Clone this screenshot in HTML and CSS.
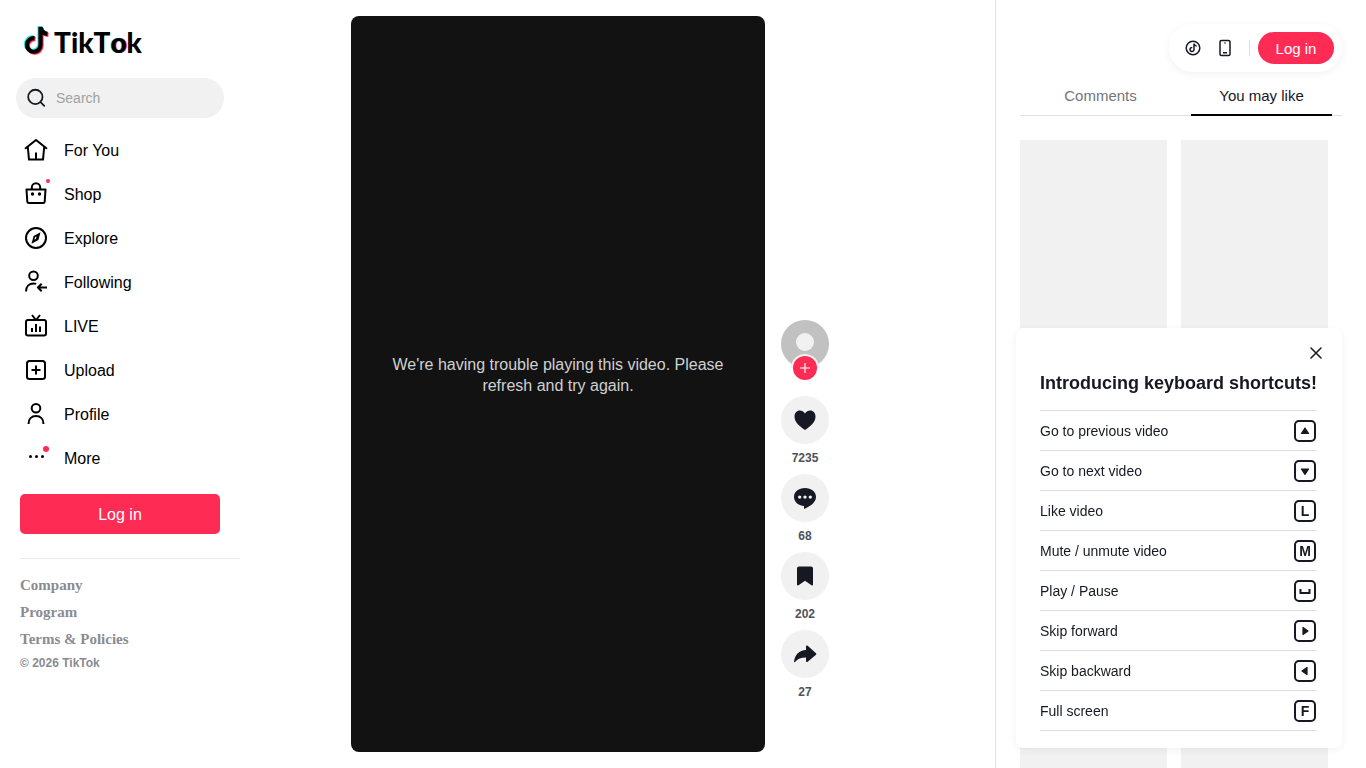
FILE: index.html
```html
<!DOCTYPE html>
<html lang="en">
<head>
<meta charset="utf-8">
<meta name="viewport" content="width=device-width, initial-scale=1">
<title>TikTok</title>
<link rel="stylesheet" href="styles.css">
</head>
<body>
<svg class="defs" aria-hidden="true">
  <symbol id="note" viewBox="0 0 26 30"><path d="M10.500 12.200A6.800 6.800 0 1 0 16.500 19V1c.5 4 3.200 6.600 7 6.900" fill="none" stroke-width="4.200"/></symbol>
</svg>
<div class="page">
  <aside class="sidebar">
    <a class="logo" href="#" aria-label="TikTok home">
      <svg class="logo-mark" viewBox="0 0 26 30" aria-hidden="true">
        <use href="#note" x="-1" y="-1" width="26" height="30" stroke="#25f4ee"/>
        <use href="#note" x="1" y="1" width="26" height="30" stroke="#fe2c55"/>
        <use href="#note" x="0" y="0" width="26" height="30" stroke="#000"/>
      </svg>
      <span class="logo-text">TikT<span class="logo-o">o</span>k</span>
    </a>
    <form class="search" role="search">
      <svg class="search-icon" viewBox="0 0 20 20" aria-hidden="true"><circle cx="8.500" cy="9" r="6.500"/><path d="M13.400 13.900l3.200 3.200"/></svg>
      <input class="search-input" type="search" placeholder="Search" aria-label="Search">
    </form>
    <nav class="nav">
      <a class="nav-item" href="#"><svg class="nav-icon" viewBox="0 0 24 24" aria-hidden="true"><path d="M1 10.800L12 2l11 8.800M3.800 9l1.200 12.600h14L20.200 9M12 14.500v7"/></svg>For You</a>
      <a class="nav-item" href="#"><svg class="nav-icon" viewBox="0 0 24 24" aria-hidden="true"><path d="M2.500 7.500h19l-.8 12.200a1.500 1.500 0 0 1-1.500 1.300H4.800a1.500 1.500 0 0 1-1.500-1.300zM7.800 7V5.500a4.200 4.200 0 0 1 8.400 0V7"/><circle class="solid" cx="8.500" cy="12" r="1.700"/><circle class="solid" cx="15.500" cy="12" r="1.700"/></svg><span class="dot dot-small"></span>Shop</a>
      <a class="nav-item" href="#"><svg class="nav-icon" viewBox="0 0 24 24" aria-hidden="true"><circle cx="12" cy="12" r="10"/><path class="solid" fill-rule="evenodd" d="M16.500 6.200L14.400 14 7.500 17.800 9.600 10zM12.500 10.200l-1.500 1-.6 2.500 1.500-1z"/></svg>Explore</a>
      <a class="nav-item" href="#"><svg class="nav-icon" viewBox="0 0 24 24" aria-hidden="true"><circle cx="9.500" cy="5.800" r="4.300"/><path d="M2 21.500c0-5 3-8 7.500-8 1 0 1.900.1 2.700.4M23 17.500h-8.500M17.700 13.700l-3.800 3.800 3.800 3.800"/></svg>Following</a>
      <a class="nav-item" href="#"><svg class="nav-icon" viewBox="0 0 24 24" aria-hidden="true"><rect x="2" y="6" width="20" height="15.500" rx="2"/><path d="M8 1l3.500 4.500M16 1l-3.500 4.500M8 14v4M12 10v8M16 12.500V18"/></svg>LIVE</a>
      <a class="nav-item" href="#"><svg class="nav-icon" viewBox="0 0 24 24" aria-hidden="true"><rect x="3" y="3" width="18" height="18" rx="2.500"/><path d="M12 7.500v9M7.500 12h9"/></svg>Upload</a>
      <a class="nav-item" href="#"><svg class="nav-icon" viewBox="0 0 24 24" aria-hidden="true"><circle cx="12" cy="6.300" r="4.300"/><path d="M4.500 22c0-5 3-8 7.500-8s7.500 3 7.500 8"/></svg>Profile</a>
      <button class="nav-item" type="button"><svg class="nav-icon" viewBox="0 0 24 24" aria-hidden="true"><circle class="solid" cx="6.500" cy="10.500" r="1.500"/><circle class="solid" cx="12.500" cy="10.500" r="1.500"/><circle class="solid" cx="18.500" cy="10.500" r="1.500"/></svg><span class="dot"></span>More</button>
    </nav>
    <button class="login login-wide" type="button">Log in</button>
    <footer class="footer">
      <a class="footer-link" href="#">Company</a>
      <a class="footer-link" href="#">Program</a>
      <a class="footer-link" href="#">Terms &amp; Policies</a>
      <p class="copyright">© 2026 TikTok</p>
    </footer>
  </aside>

  <main class="stage">
    <section class="video" aria-label="Video"><p class="video-error">We're having trouble playing this video. Please refresh and try again.</p></section>
    <div class="actions">
      <div class="author">
        <a class="avatar" href="#" aria-label="Author profile"><svg viewBox="0 0 48 48" aria-hidden="true"><circle cx="24" cy="24" r="24" fill="#c1c1c1"/><circle cx="24" cy="22" r="9" fill="#f1f1f1"/><circle cx="24" cy="48" r="14" fill="#f1f1f1"/></svg></a>
        <button class="follow" type="button" aria-label="Follow"><svg viewBox="0 0 12 12" aria-hidden="true"><path d="M6 1v10M1 6h10"/></svg></button>
      </div>
      <div class="action"><button class="action-button" type="button" aria-label="Like"><svg viewBox="0 0 24 24" aria-hidden="true"><path d="M12 22C7 18.500 1.500 14.500 1.500 8.500c0-3.500 2.300-6 5.300-6 2.100 0 4 1.100 5.200 3 1.200-1.900 3.100-3 5.200-3 3 0 5.300 2.500 5.300 6 0 6-5.500 10-10.500 13.500z"/></svg></button><strong class="count">7235</strong></div>
      <div class="action"><button class="action-button" type="button" aria-label="Comments"><svg viewBox="0 0 24 24" aria-hidden="true"><path fill-rule="evenodd" d="M12 2C5.800 2 1 5.700 1 11c0 4.800 4.200 8.600 10 8.900V23c6-2.500 12-6.500 12-12 0-5.300-4.800-9-11-9zM6.700 9.400a1.700 1.700 0 1 0 0 3.400 1.700 1.700 0 0 0 0-3.400zM12 9.400a1.700 1.700 0 1 0 0 3.400 1.700 1.700 0 0 0 0-3.400zM17.300 9.400a1.700 1.700 0 1 0 0 3.400 1.700 1.700 0 0 0 0-3.400z"/></svg></button><strong class="count">68</strong></div>
      <div class="action"><button class="action-button" type="button" aria-label="Save"><svg viewBox="0 0 24 24" aria-hidden="true"><path d="M4 4.500C4 3.400 4.900 2.500 6 2.500h12c1.100 0 2 .9 2 2v16c0 .8-.9 1.200-1.500.7L12 16.700l-6.500 4.500c-.6.500-1.500.1-1.500-.7z"/></svg></button><strong class="count">202</strong></div>
      <div class="action"><button class="action-button" type="button" aria-label="Share"><svg viewBox="0 0 24 24" aria-hidden="true"><path d="M13 4.400c0-.9 1-1.300 1.700-.7l8.300 7.500c.5.500.5 1.100 0 1.600l-8.300 6.900c-.7.600-1.700.1-1.700-.7v-3.500c-5 0-8.500 1.300-11 4.500-.5.600-1.200.3-1-.5C2 12.500 6 8.500 13 8z"/></svg></button><strong class="count">27</strong></div>
    </div>
  </main>

  <aside class="panel">
    <div class="toolbar">
      <button class="tool" type="button" aria-label="Get coins"><svg viewBox="0 0 20 20" aria-hidden="true"><circle cx="10" cy="10" r="6.800"/><path d="M9.300 9.500a2 2 0 1 0 1.700 2V5.500c.2 1.500 1.200 2.400 2.600 2.500"/></svg></button>
      <button class="tool" type="button" aria-label="Get app"><svg viewBox="0 0 20 20" aria-hidden="true"><rect x="5" y="2.500" width="10" height="15" rx="1.500"/><path d="M8 14.800h4M9.400 5h1.200"/></svg></button>
      <span class="divider"></span>
      <button class="login login-pill" type="button">Log in</button>
    </div>
    <div class="tabs" role="tablist">
      <button class="tab" type="button" role="tab" aria-selected="false">Comments</button>
      <button class="tab tab-active" type="button" role="tab" aria-selected="true">You may like</button>
    </div>
    <div class="suggestions"><div class="card"></div><div class="card"></div><div class="card"></div><div class="card"></div></div>
  </aside>
</div>

<section class="shortcuts" role="dialog" aria-labelledby="shortcuts-title">
  <button class="close" type="button" aria-label="Close"><svg viewBox="0 0 12 12" aria-hidden="true"><path d="M1 1l10 10M11 1L1 11"/></svg></button>
  <h2 class="shortcuts-title" id="shortcuts-title">Introducing keyboard shortcuts!</h2>
  <ul class="shortcut-list">
    <li class="shortcut">Go to previous video<kbd class="key"><svg viewBox="0 0 18 18" aria-hidden="true"><path d="M9 6l3.600 5.500H5.400z"/></svg></kbd></li>
    <li class="shortcut">Go to next video<kbd class="key"><svg viewBox="0 0 18 18" aria-hidden="true"><path d="M9 12.500L5.400 7h7.200z"/></svg></kbd></li>
    <li class="shortcut">Like video<kbd class="key">L</kbd></li>
    <li class="shortcut">Mute / unmute video<kbd class="key">M</kbd></li>
    <li class="shortcut">Play / Pause<kbd class="key"><svg viewBox="0 0 18 18" aria-hidden="true"><path class="space" d="M4.500 7v4h9V7"/></svg></kbd></li>
    <li class="shortcut">Skip forward<kbd class="key"><svg viewBox="0 0 18 18" aria-hidden="true"><path d="M12 9l-5 3.600V5.400z"/></svg></kbd></li>
    <li class="shortcut">Skip backward<kbd class="key"><svg viewBox="0 0 18 18" aria-hidden="true"><path d="M6 9l5-3.600v7.200z"/></svg></kbd></li>
    <li class="shortcut">Full screen<kbd class="key">F</kbd></li>
  </ul>
</section>
</body>
</html>
```

FILE: styles.css
```css
* {
  box-sizing: border-box;
}

body {
  margin: 0;
  overflow: hidden;
  background: #fff;
  color: #000;
  font-family: "Liberation Sans", Arial, sans-serif;
}

button {
  padding: 0;
  border: 0;
  background: none;
  color: inherit;
  font: inherit;
  cursor: pointer;
}

a {
  color: inherit;
  text-decoration: none;
}

svg {
  display: block;
}

.defs {
  position: absolute;
  width: 0;
  height: 0;
}

.page {
  display: grid;
  grid-template-columns: 240px 1fr 371px;
  grid-template-rows: 100vh;
}

/* Sidebar */
.sidebar {
  display: flex;
  flex-direction: column;
}

.logo {
  display: flex;
  align-items: center;
  gap: 4px;
  height: 30px;
  margin: 26px 24px 22px;
}

.logo-mark {
  width: 26px;
  height: 30px;
}

.logo-text {
  padding-top: 2px;
  font-family: Lato, sans-serif;
  font-size: 28px;
  font-weight: 900;
  font-kerning: none;
  line-height: 30px;
}

.logo-o {
  text-shadow: -1px 0 #25f4ee, 1px 0 #fe2c55;
}

.search {
  display: flex;
  align-items: center;
  gap: 8px;
  height: 40px;
  margin: 0 16px;
  padding: 0 12px 0 10px;
  border-radius: 20px;
  background: #f1f1f1;
}

.search-icon {
  flex: none;
  width: 22px;
  height: 22px;
  fill: none;
  stroke: #161823;
  stroke-width: 1.6;
  stroke-linecap: round;
}

.search-input {
  flex: 1;
  min-width: 0;
  padding: 0;
  border: 0;
  outline: 0;
  background: none;
  font: inherit;
  font-size: 14px;
}

.search-input::placeholder {
  color: #a0a0a0;
}

.nav {
  display: flex;
  flex-direction: column;
  margin: 10px 16px 14px;
}

.nav-item {
  position: relative;
  display: flex;
  align-items: center;
  gap: 16px;
  height: 44px;
  padding: 0 8px;
  font-size: 16px;
  line-height: 21px;
}

.nav-icon {
  width: 24px;
  height: 24px;
  fill: none;
  stroke: #000;
  stroke-width: 2;
  stroke-linejoin: round;
}

.nav-icon .solid {
  fill: #000;
  stroke: none;
}

.dot {
  position: absolute;
  top: 10px;
  left: 27px;
  width: 6px;
  height: 6px;
  border-radius: 50%;
  background: #fe2c55;
}

.dot-small {
  top: 7px;
  left: 30px;
  width: 4px;
  height: 4px;
}

.login {
  background: #fe2c55;
  color: #fff;
}

.login-wide {
  height: 40px;
  margin: 0 20px;
  border-radius: 5px;
  font-size: 16px;
  line-height: 21px;
}

.footer {
  display: flex;
  flex-direction: column;
  margin: 24px 0 0 20px;
  padding-top: 13px;
  border-top: 1px solid #ececec;
  color: #8a8b91;
}

.footer-link {
  font-family: "Liberation Serif", serif;
  font-size: 15px;
  font-weight: 700;
  line-height: 27px;
}

.copyright {
  margin: 2px 0 0;
  font-size: 12px;
  font-weight: 700;
  line-height: 16px;
}

/* Video */
.stage {
  display: flex;
  justify-content: center;
  align-items: flex-end;
  gap: 16px;
  padding: 16px 55px 16px 0;
}

.video {
  display: flex;
  flex: none;
  align-items: center;
  justify-content: center;
  height: calc(100vh - 32px);
  aspect-ratio: 9 / 16;
  padding: 0 36px;
  border-radius: 8px;
  background: #121212;
}

.video-error {
  margin: 0 0 18px;
  color: #d0d0d0;
  font-size: 16px;
  line-height: 21px;
  text-align: center;
}

.actions {
  display: flex;
  flex-direction: column;
  width: 48px;
  padding-bottom: 44px;
}

.author {
  position: relative;
  margin-bottom: 28px;
}

.avatar {
  display: block;
  height: 48px;
}

.follow {
  position: absolute;
  top: 36px;
  left: 12px;
  display: grid;
  place-items: center;
  width: 24px;
  height: 24px;
  border-radius: 50%;
  background: #fe2c55;
}

.follow svg {
  width: 12px;
  height: 12px;
  stroke: #fff;
  stroke-width: 1.2;
}

.action {
  display: flex;
  flex-direction: column;
  align-items: center;
  height: 78px;
}

.action-button {
  display: grid;
  flex: none;
  place-items: center;
  width: 48px;
  height: 48px;
  border-radius: 50%;
  background: #f1f1f1;
}

.action-button svg {
  width: 24px;
  height: 24px;
  fill: #161823;
}

.count {
  margin-top: 6px;
  color: #50525c;
  font-size: 12px;
  line-height: 16px;
}

/* Right panel */
.panel {
  display: flex;
  flex-direction: column;
  min-height: 0;
  overflow: hidden;
  padding: 24px 24px 0;
  border-left: 1px solid #e3e3e4;
}

.toolbar {
  display: flex;
  flex: none;
  align-items: center;
  align-self: flex-end;
  gap: 8px;
  height: 48px;
  padding: 0 8px 0 12px;
  border-radius: 24px;
  box-shadow: 0 2px 10px rgba(0, 0, 0, 0.06);
}

.tool {
  display: grid;
  place-items: center;
  width: 24px;
  height: 24px;
}

.tool + .tool {
  margin-right: 4px;
}

.tool svg {
  width: 20px;
  height: 20px;
  fill: none;
  stroke: #161823;
  stroke-width: 1.5;
}

.divider {
  width: 1px;
  height: 16px;
  background: #dedfe0;
}

.login-pill {
  width: 76px;
  height: 32px;
  border-radius: 16px;
  font-size: 15px;
}

.tabs {
  display: grid;
  flex: none;
  grid-template-columns: 1fr 1fr;
  height: 44px;
  box-shadow: inset 0 -1px #e0e0e0;
}

.tab {
  margin: 0 10px;
  padding-top: 4px;
  border-bottom: 2px solid transparent;
  color: #73747b;
  font-size: 15px;
}

.tab-active {
  border-bottom-color: #000;
  color: #161823;
}

.suggestions {
  display: grid;
  grid-template-columns: 1fr 1fr;
  gap: 14px;
  padding: 24px 14px 0 0;
}

.card {
  height: 340px;
  background: #f1f1f1;
}

/* Shortcuts dialog */
.shortcuts {
  position: fixed;
  right: 24px;
  bottom: 20px;
  width: 326px;
  padding: 18px 25px 17px 24px;
  border-radius: 8px;
  background: #fff;
  box-shadow: 0 2px 8px rgba(0, 0, 0, 0.06);
  color: #161823;
}

.close {
  display: grid;
  place-items: center;
  width: 14px;
  height: 14px;
  margin: 0 -6px 0 auto;
}

.close svg {
  width: 12px;
  height: 12px;
  stroke: #161823;
  stroke-width: 1.5;
  stroke-linecap: round;
}

.shortcuts-title {
  margin: 11px 0 14px;
  font-size: 18px;
  line-height: 25px;
  white-space: nowrap;
}

.shortcut-list {
  margin: 0;
  padding: 0;
  border-top: 1px solid #dedfe0;
  list-style: none;
}

.shortcut {
  display: flex;
  align-items: center;
  justify-content: space-between;
  height: 40px;
  padding-right: 1px;
  border-bottom: 1px solid #dedfe0;
  font-size: 14px;
}

.key {
  display: grid;
  place-items: center;
  width: 22px;
  height: 22px;
  border: 2px solid #161823;
  border-radius: 5px;
  font-family: inherit;
  font-size: 14px;
  font-weight: 700;
  line-height: 18px;
}

.key svg {
  width: 18px;
  height: 18px;
  fill: #161823;
  stroke: #161823;
  stroke-width: 1.2;
  stroke-linejoin: round;
}

.key .space {
  fill: none;
  stroke-width: 2;
  stroke-linejoin: miter;
}
```
